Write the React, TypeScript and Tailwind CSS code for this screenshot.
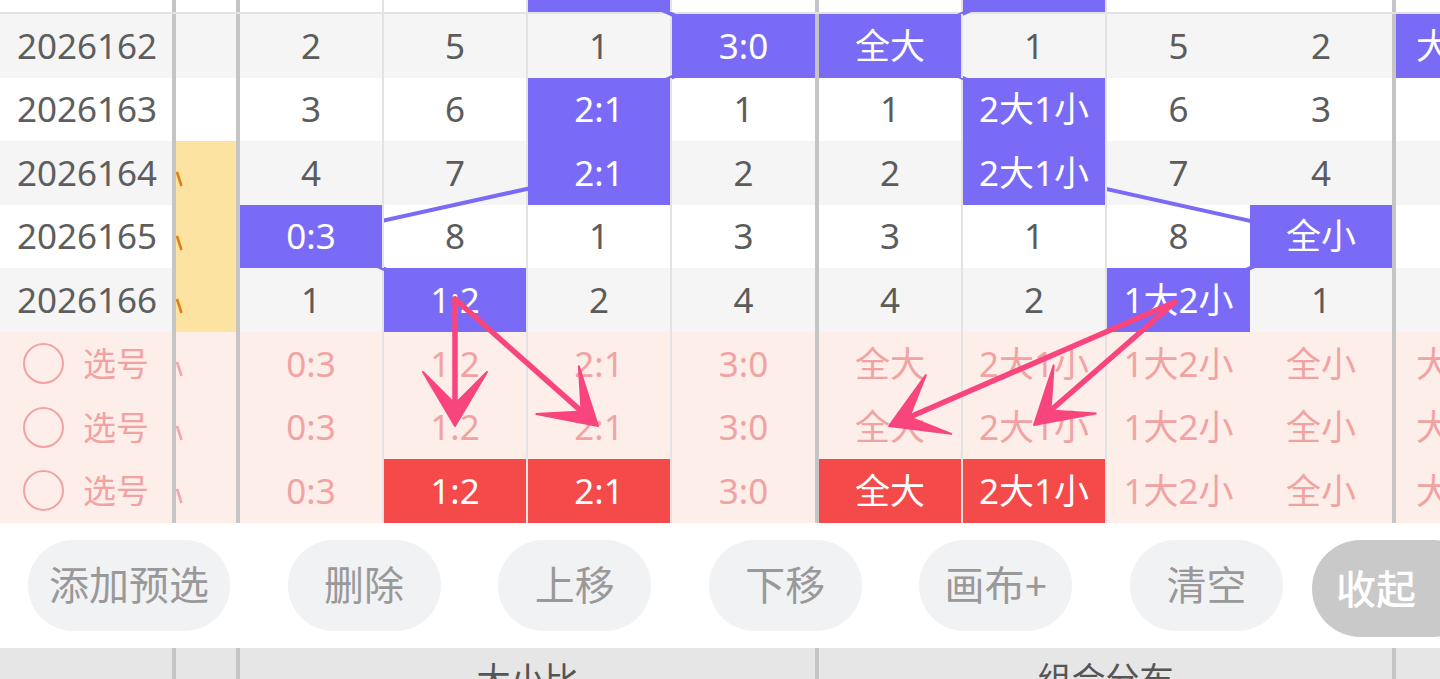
import React from "react";

type Cell = string | { t: string; on: true };

interface DataRow {
  issue: string;
  mark?: boolean;
  g1: Cell[];
  g2: Cell[];
  extra?: Cell;
}

const P = (t: string): Cell => ({ t, on: true });

// first row is scrolled almost out of view, only its bottom edge shows
const rows: DataRow[] = [
  { issue: "", g1: ["", "", P(""), ""], g2: ["", P(""), "", ""] },
  { issue: "2026162", g1: ["2", "5", "1", P("3:0")], g2: [P("全大"), "1", "5", "2"], extra: P("大") },
  { issue: "2026163", g1: ["3", "6", P("2:1"), "1"], g2: ["1", P("2大1小"), "6", "3"] },
  { issue: "2026164", mark: true, g1: ["4", "7", P("2:1"), "2"], g2: ["2", P("2大1小"), "7", "4"] },
  { issue: "2026165", mark: true, g1: [P("0:3"), "8", "1", "3"], g2: ["3", "1", "8", P("全小")] },
  { issue: "2026166", mark: true, g1: ["1", P("1:2"), "2", "4"], g2: ["4", "2", P("1大2小"), "1"] },
];

const picks: { red: number[] }[] = [{ red: [] }, { red: [] }, { red: [1, 2, 4, 5] }];
const pickG1 = ["0:3", "1:2", "2:1", "3:0"];
const pickG2 = ["全大", "2大1小", "1大2小", "全小"];

const w1 = [
  "w-[144px] border-r-2 border-[#e3e3e3]",
  "w-[144px] border-r-2 border-[#e3e3e3]",
  "w-[144px] border-r-2 border-[#e3e3e3]",
  "w-[143px]",
];
const w2 = [
  "w-[144px] border-r-2 border-[#e3e3e3]",
  "w-[144px] border-r-2 border-[#e3e3e3]",
  "w-[143px]",
  "w-[142px]",
];

const Sep = () => <div className="w-[4px] shrink-0 bg-[#c5c5c5]" />;

const Mark = ({ pink }: { pink?: boolean }) => (
  <svg width="7" height="16" viewBox="0 0 7 16" className="mt-[4px]">
    <line x1="1" y1="1" x2="5.5" y2="15" stroke={pink ? "#f2a6b0" : "#e37d1b"} strokeWidth="2.6" />
  </svg>
);

const ValueCell = ({ cell, w }: { cell: Cell; w: string }) => {
  const on = typeof cell !== "string";
  const text = typeof cell === "string" ? cell : cell.t;
  return (
    <div
      className={`flex shrink-0 items-center justify-center ${w} ${
        on ? "relative z-20 bg-[#7a6bf7] text-white" : "text-[#5c5c5c]"
      }`}
    >
      {text}
    </div>
  );
};

const PickCell = ({ text, red, w }: { text: string; red: boolean; w: string }) => (
  <div
    className={`flex shrink-0 items-center justify-center ${w} ${
      red ? "bg-[#f44a4a] text-white" : "text-[#f1a3a3]"
    }`}
  >
    {text}
  </div>
);

// centre-to-centre trend lines, page coordinates
const trend1 = "599,-17.8 743.5,45.8 599,109.4 599,173 311,236.6 455,300.2";
const trend2 = "1034,-17.8 890,45.8 1034,109.4 1034,173 1321,236.6 1178,300.2";

function Arrow({ x1, y1, x2, y2 }: { x1: number; y1: number; x2: number; y2: number }) {
  const dx = x2 - x1;
  const dy = y2 - y1;
  const len = Math.hypot(dx, dy);
  const ux = dx / len;
  const uy = dy / len;
  const px = -uy;
  const py = ux;
  const back = 54;
  const side = 32;
  const notch = 22;
  const bx = x2 - ux * back;
  const by = y2 - uy * back;
  const nx = x2 - ux * notch;
  const ny = y2 - uy * notch;
  const pts = `${x2},${y2} ${bx + px * side},${by + py * side} ${nx},${ny} ${bx - px * side},${by - py * side}`;
  return (
    <g>
      <line x1={x1} y1={y1} x2={nx} y2={ny} stroke="#f8457e" strokeWidth="5.5" strokeLinecap="round" />
      <polygon points={pts} fill="#f8457e" stroke="#f8457e" strokeWidth="2" strokeLinejoin="round" />
    </g>
  );
}

const buttons = [
  { label: "添加预选", w: "w-[202px]" },
  { label: "删除", w: "w-[153px]" },
  { label: "上移", w: "w-[153px]" },
  { label: "下移", w: "w-[153px]" },
  { label: "画布+", w: "w-[153px]" },
  { label: "清空", w: "w-[153px]" },
];

export default function App() {
  return (
    <div className="relative h-[679px] w-[1440px] overflow-hidden bg-white font-['Noto_Sans','Noto_Sans_CJK_SC',sans-serif]">
      {/* table */}
      <div className="relative flex flex-col text-[35px]">
        {rows.map((r, i) => (
          <div
            key={i}
            className={`flex h-[63.6px] shrink-0 ${i === 0 ? "mt-[-49.6px] border-b-2 border-[#e2e2e2]" : ""} ${
              i % 2 === 1 ? "bg-[#f5f5f5]" : "bg-white"
            }`}
          >
            <div className="flex w-[172px] shrink-0 items-center pl-[17px] text-[35px] text-[#5e5e5e]">{r.issue}</div>
            <Sep />
            <div className={`flex w-[60px] shrink-0 items-start pt-[26px] ${r.mark ? "bg-[#fde3a1]" : ""}`}>
              {r.mark && <Mark />}
            </div>
            <Sep />
            {r.g1.map((c, j) => (
              <ValueCell key={j} cell={c} w={w1[j]} />
            ))}
            <Sep />
            {r.g2.map((c, j) => (
              <ValueCell key={j} cell={c} w={w2[j]} />
            ))}
            <Sep />
            <div
              className={`flex min-w-0 flex-1 items-center overflow-hidden whitespace-nowrap pl-[20px] ${
                r.extra ? "relative z-20 bg-[#7a6bf7] text-white" : ""
              }`}
            >
              {r.extra ? (typeof r.extra === "string" ? r.extra : r.extra.t) : ""}
            </div>
          </div>
        ))}

        {picks.map((p, i) => (
          <div key={i} className="flex h-[63.6px] shrink-0 bg-[#fdeee9]">
            <div className="flex w-[172px] shrink-0 items-center pl-[23px] text-[#f1a3a3]">
              <div className="h-[41px] w-[41px] rounded-full border-2 border-[#f1a3a3]" />
              <span className="ml-[19px] text-[33px]">选号</span>
            </div>
            <Sep />
            <div className="flex w-[60px] shrink-0 items-start pt-[25px]">
              <Mark pink />
            </div>
            <Sep />
            {pickG1.map((t, j) => (
              <PickCell key={j} text={t} red={p.red.includes(j)} w={w1[j]} />
            ))}
            <Sep />
            {pickG2.map((t, j) => (
              <PickCell key={j} text={t} red={p.red.includes(j + 4)} w={w2[j]} />
            ))}
            <Sep />
            <div className="flex min-w-0 flex-1 items-center overflow-hidden whitespace-nowrap pl-[20px] text-[#f1a3a3]">
              大
            </div>
          </div>
        ))}

        <svg
          className="pointer-events-none absolute left-0 top-0 z-10"
          width="1440"
          height="523"
          viewBox="0 0 1440 523"
          overflow="visible"
        >
          <polyline points={trend1} fill="none" stroke="#7a6bf7" strokeWidth="4" />
          <polyline points={trend2} fill="none" stroke="#7a6bf7" strokeWidth="4" />
        </svg>

        <svg
          className="pointer-events-none absolute left-0 top-0 z-30"
          width="1440"
          height="523"
          viewBox="0 0 1440 523"
        >
          <Arrow x1={455} y1={299} x2={455} y2={426} />
          <Arrow x1={455} y1={299} x2={598} y2={426} />
          <Arrow x1={1175} y1={302} x2={889} y2={426} />
          <Arrow x1={1175} y1={302} x2={1034} y2={425} />
        </svg>
      </div>

      {/* actions */}
      <div className="flex h-[125.2px] items-center gap-[57.6px] pl-[28px]">
        {buttons.map((b) => (
          <button
            key={b.label}
            className={`flex h-[91px] shrink-0 items-center justify-center rounded-full bg-[#f1f2f4] text-[40px] text-[#999999] ${b.w}`}
          >
            {b.label}
          </button>
        ))}
      </div>
      <button className="absolute left-[1312px] top-[540px] flex h-[97px] w-[170px] items-center rounded-full bg-[#c9c9c9] pl-[24px] text-[40px] font-medium text-white">
        收起
      </button>

      {/* bottom header */}
      <div className="flex h-[64px] bg-[#e6e6e6] text-[34px] text-[#555555]">
        <div className="w-[172px] shrink-0" />
        <Sep />
        <div className="w-[60px] shrink-0" />
        <Sep />
        <div className="flex w-[575px] shrink-0 items-center justify-center">大小比</div>
        <Sep />
        <div className="flex w-[573px] shrink-0 items-center justify-center">组合分布</div>
        <Sep />
        <div className="flex-1" />
      </div>
    </div>
  );
}
